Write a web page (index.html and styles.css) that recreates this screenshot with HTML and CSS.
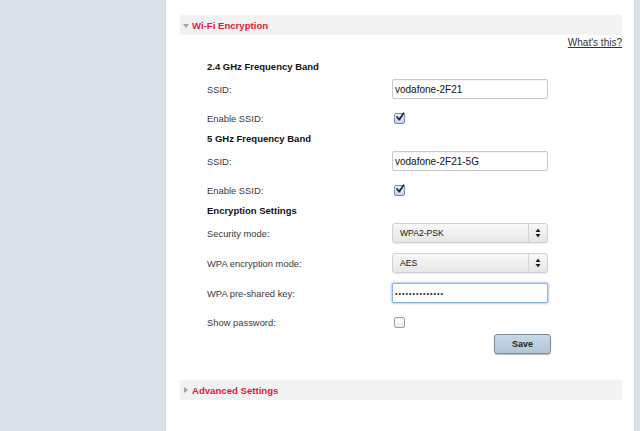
FILE: index.html
```html
<!DOCTYPE html>
<html>
<head>
<meta charset="utf-8">
<link rel="stylesheet" href="styles.css">
</head>
<body>
<div class="page">
  <aside class="sidebar"></aside>
  <main class="main">
    <div class="section-bar"><span class="tri-down"></span><span class="section-title">Wi-Fi Encryption</span></div>
    <div class="help-row"><a class="help" href="#">What's this?</a></div>
    <div class="form">
      <div class="heading first">2.4 GHz Frequency Band</div>
      <div class="row field">
        <label class="lbl">SSID:</label>
        <div class="text-input">vodafone-2F21</div>
      </div>
      <div class="row check">
        <label class="lbl">Enable SSID:</label>
        <span class="checkbox checked"><svg viewBox="0 0 10 10" width="10" height="10"><path d="M2 5 L4.3 7.6 L8.5 1.2" fill="none" stroke="#1e2a4a" stroke-width="1.8" stroke-linecap="round" stroke-linejoin="round"/></svg></span>
      </div>
      <div class="heading">5 GHz Frequency Band</div>
      <div class="row field">
        <label class="lbl">SSID:</label>
        <div class="text-input">vodafone-2F21-5G</div>
      </div>
      <div class="row check">
        <label class="lbl">Enable SSID:</label>
        <span class="checkbox checked"><svg viewBox="0 0 10 10" width="10" height="10"><path d="M2 5 L4.3 7.6 L8.5 1.2" fill="none" stroke="#1e2a4a" stroke-width="1.8" stroke-linecap="round" stroke-linejoin="round"/></svg></span>
      </div>
      <div class="heading">Encryption Settings</div>
      <div class="row field">
        <label class="lbl">Security mode:</label>
        <div class="select"><span class="sel-text">WPA2-PSK</span><span class="sel-arrows"><svg viewBox="0 0 6 10" width="6" height="10"><path d="M3 0.5 L5.5 4 L0.5 4 Z M3 9.5 L5.5 6 L0.5 6 Z" fill="#222"/></svg></span></div>
      </div>
      <div class="row field">
        <label class="lbl">WPA encryption mode:</label>
        <div class="select"><span class="sel-text">AES</span><span class="sel-arrows"><svg viewBox="0 0 6 10" width="6" height="10"><path d="M3 0.5 L5.5 4 L0.5 4 Z M3 9.5 L5.5 6 L0.5 6 Z" fill="#222"/></svg></span></div>
      </div>
      <div class="row field">
        <label class="lbl">WPA pre-shared key:</label>
        <div class="text-input focused"><span class="dots">••••••••••••••</span></div>
      </div>
      <div class="row check">
        <label class="lbl">Show password:</label>
        <span class="checkbox"></span>
      </div>
      <div class="row actions">
        <span class="lbl"></span>
        <button class="save">Save</button>
      </div>
    </div>
    <div class="section-bar advanced"><span class="tri-right"></span><span class="section-title">Advanced Settings</span></div>
  </main>
  <aside class="edge"></aside>
</div>
</body>
</html>
```

FILE: styles.css
```css
html, body {
  margin: 0;
  padding: 0;
  height: 100%;
}
body {
  font-family: "Liberation Sans", Arial, sans-serif;
  font-size: 9.4px;
  color: #333;
  background: #fff;
}
.page {
  display: flex;
  height: 431px;
}
.sidebar {
  width: 166px;
  flex: none;
  background: #d9e0ea;
}
.edge {
  width: 6px;
  flex: none;
  background: #d9e0ea;
}
.main {
  flex: 1;
  padding: 15px 12px 0 14px;
  display: flex;
  flex-direction: column;
}
.section-bar {
  height: 20px;
  background: #f2f2f2;
  display: flex;
  align-items: center;
  padding-left: 3px;
  border-radius: 2px;
}
.tri-down {
  width: 0;
  height: 0;
  border-left: 3px solid transparent;
  border-right: 3px solid transparent;
  border-top: 4px solid #a0a4a8;
  margin-right: 3px;
  margin-top: 2px;
}
.tri-right {
  width: 0;
  height: 0;
  border-top: 3px solid transparent;
  border-bottom: 3px solid transparent;
  border-left: 4px solid #a0a4a8;
  margin-left: 1px;
  margin-right: 4px;
}
.section-title {
  color: #e5173a;
  font-weight: bold;
  font-size: 9.6px;
}
.help-row {
  display: flex;
  justify-content: flex-end;
  margin-top: 1px;
  line-height: 14px;
}
.help {
  color: #333;
  text-decoration: underline;
  font-size: 10px;
}
.form {
  padding-left: 27px;
  display: flex;
  flex-direction: column;
}
.heading {
  font-weight: bold;
  font-size: 9.5px;
  color: #111;
  line-height: 14px;
  margin-top: 4px;
}
.heading.first {
  margin-top: 10px;
}
.row {
  display: flex;
  align-items: center;
}
.row.field {
  height: 30px;
}
.row.check {
  height: 20px;
  margin-top: 4px;
}
.lbl {
  width: 185px;
  flex: none;
  color: #3a3a3a;
}
.text-input {
  width: 156px;
  height: 20px;
  box-sizing: border-box;
  border: 1px solid #c9c9c9;
  border-radius: 2px;
  padding: 0 2px;
  display: flex;
  align-items: center;
  color: #111;
  font-size: 10px;
  background: #fff;
  box-shadow: inset 0 1px 1px rgba(0,0,0,0.05);
}
.text-input.focused {
  border-color: #86b4e8;
  box-shadow: 0 0 2px 1px rgba(120,170,230,0.55);
}
.dots {
  font-size: 7px;
  letter-spacing: 1.05px;
  color: #222;
}
.select {
  width: 156px;
  height: 20px;
  box-sizing: border-box;
  border: 1px solid #d0d0d0;
  border-radius: 3px;
  background: linear-gradient(#f8f8f8, #e6e6e6);
  display: flex;
  align-items: center;
  box-shadow: 0 1px 1px rgba(0,0,0,0.08);
}
.sel-text {
  flex: 1;
  padding-left: 7px;
  color: #111;
  font-size: 8.6px;
}
.sel-arrows {
  width: 18px;
  height: 18px;
  border-left: 1px solid #d4d4d4;
  display: flex;
  align-items: center;
  justify-content: center;
}
.checkbox {
  width: 9px;
  height: 9px;
  border: 1px solid #9aa0a8;
  border-radius: 2px;
  background: linear-gradient(#ffffff, #e8ecf2);
  margin-left: 2px;
  position: relative;
}
.checkbox.checked {
  background: linear-gradient(#e6eefa, #c4d4ee);
  border-color: #7d8aa0;
}
.checkbox svg {
  position: absolute;
  left: 0;
  top: -2px;
}
.row.actions {
  margin-top: 2px;
  height: 20px;
}
.save {
  margin-left: 102px;
  width: 57px;
  height: 20px;
  box-sizing: border-box;
  border: 1px solid #7c8a96;
  border-radius: 3px;
  background: linear-gradient(#c8d8e6, #b2c6d8);
  font-family: "Liberation Sans", Arial, sans-serif;
  font-size: 9px;
  font-weight: bold;
  color: #222;
  padding: 0;
  box-shadow: 0 1px 1px rgba(0,0,0,0.25);
}
.section-bar.advanced {
  margin-top: 26px;
}
```
